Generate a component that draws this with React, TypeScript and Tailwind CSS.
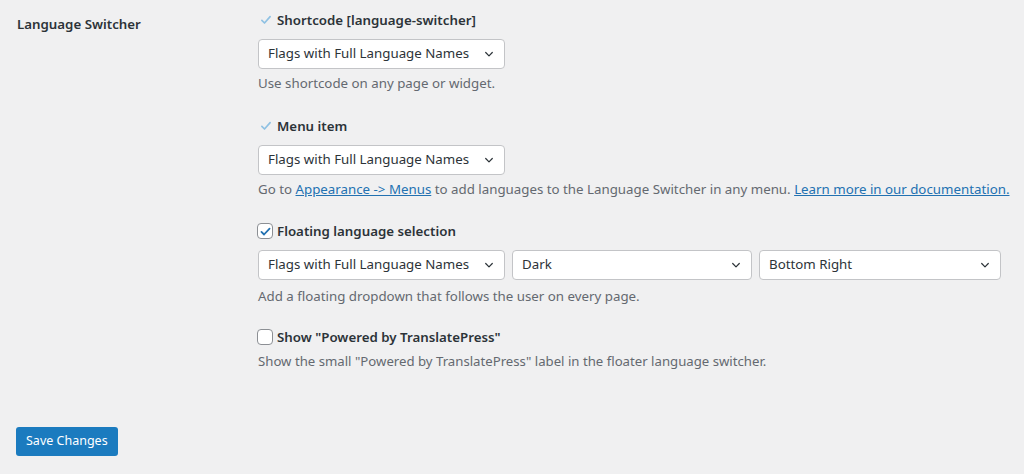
import React from 'react';

const font = { fontFamily: '"Noto Sans", "Open Sans", Arial, sans-serif' };

function Chevron() {
  return (
    <svg width="12" height="12" viewBox="0 0 20 20" className="shrink-0">
      <path d="M4.5 7.5l5.5 5.5 5.5-5.5" fill="none" stroke="#2c3338" strokeWidth="2" strokeLinecap="round" strokeLinejoin="round" />
    </svg>
  );
}

function Select({ value, className = '' }: { value: string; className?: string }) {
  return (
    <div
      className={`flex h-[30px] items-center justify-between rounded-[4px] border border-[#c3c4c7] bg-white pl-[9px] pr-[9px] text-[13.3px] text-[#2c3338] ${className}`}
    >
      <span>{value}</span>
      <Chevron />
    </div>
  );
}

function Tick() {
  return (
    <svg width="12" height="12" viewBox="0 0 16 16" className="ml-[2px] mr-[1px] shrink-0">
      <path d="M2.5 8.5l3.5 3.5 7.5-8.5" fill="none" stroke="#8fc1e3" strokeWidth="2.2" strokeLinecap="round" strokeLinejoin="round" />
    </svg>
  );
}

function Box({ checked }: { checked?: boolean }) {
  return (
    <span className="-ml-px flex h-4 w-4 shrink-0 items-center justify-center rounded-[4px] border border-[#8c8f94] bg-white">
      {checked && (
        <svg width="13" height="13" viewBox="0 0 16 16">
          <path d="M3 8.5l3.2 3.2L13 4.5" fill="none" stroke="#2271b1" strokeWidth="2.2" strokeLinecap="round" strokeLinejoin="round" />
        </svg>
      )}
    </span>
  );
}

export default function App() {
  return (
    <div className="h-[474px] w-[1024px] overflow-hidden bg-[#f0f0f1] text-[#1d2327]" style={font}>
      <div className="flex">
        <div className="w-[258px] shrink-0 pl-[17px] pt-[14px] text-[13.3px] font-semibold leading-5 text-[#2c3338]">Language Switcher</div>

        <div className="pt-[10px]">
          {/* shortcode */}
          <div className="flex items-center gap-[4px] text-[13.3px] font-semibold leading-5 text-[#2c3338]">
            <Tick />
            <span>Shortcode [language-switcher]</span>
          </div>
          <Select value="Flags with Full Language Names" className="mt-[9px] w-[247px]" />
          <p className="mt-[4px] text-[13.3px] leading-5 text-[#646970]">Use shortcode on any page or widget.</p>

          {/* menu item */}
          <div className="mt-[23px] flex items-center gap-[4px] text-[13.3px] font-semibold leading-5 text-[#2c3338]">
            <Tick />
            <span>Menu item</span>
          </div>
          <Select value="Flags with Full Language Names" className="mt-[9px] w-[247px]" />
          <p className="mt-[4px] whitespace-nowrap text-[13.3px] leading-5 text-[#646970]">
            Go to{' '}
            <a className="text-[#2271b1] underline">Appearance -&gt; Menus</a> to add languages to the Language Switcher in any menu.{' '}
            <a className="text-[#2271b1] underline">Learn more in our documentation.</a>
          </p>

          {/* floater */}
          <div className="mt-[22px] flex items-center gap-[4px] text-[13.3px] font-semibold leading-5 text-[#2c3338]">
            <Box checked />
            <span>Floating language selection</span>
          </div>
          <div className="mt-[9px] flex gap-[7px]">
            <Select value="Flags with Full Language Names" className="w-[247px]" />
            <Select value="Dark" className="w-[240px]" />
            <Select value="Bottom Right" className="w-[242px]" />
          </div>
          <p className="mt-[6px] text-[13.3px] leading-5 text-[#646970]">Add a floating dropdown that follows the user on every page.</p>

          {/* powered by */}
          <div className="mt-[21px] flex items-center gap-[4px] text-[13.3px] font-semibold leading-5 text-[#2c3338]">
            <Box />
            <span>Show "Powered by TranslatePress"</span>
          </div>
          <p className="mt-[4px] text-[13.2px] leading-5 text-[#646970]">
            Show the small "Powered by TranslatePress" label in the floater language switcher.
          </p>
        </div>
      </div>

      <div className="pl-[16px] pt-[56px]">
        <button className="h-[29px] rounded-[3px] bg-[#1b7bbf] px-[10px] text-[12.5px] text-white">Save Changes</button>
      </div>
    </div>
  );
}
